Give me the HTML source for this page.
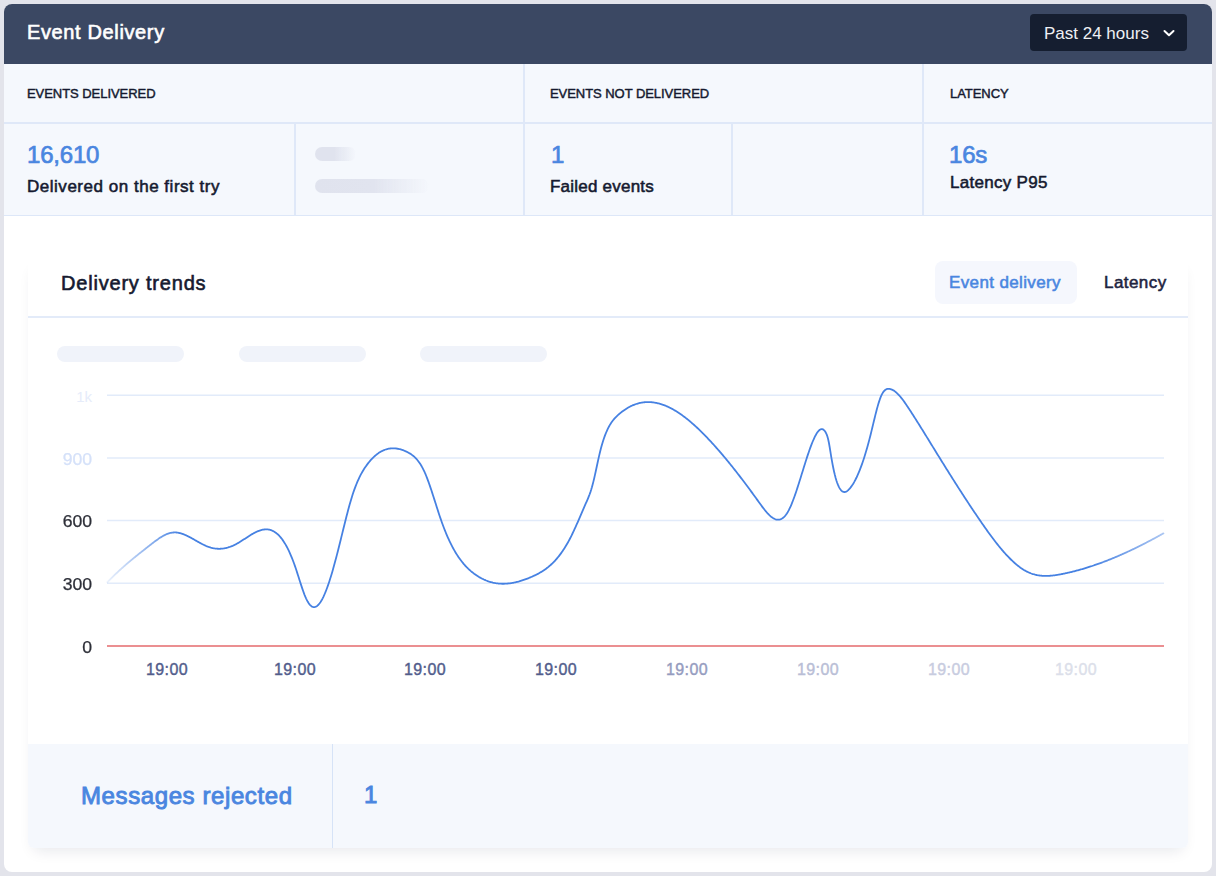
<!DOCTYPE html>
<html>
<head>
<meta charset="utf-8">
<style>
html,body{margin:0;padding:0;width:1216px;height:876px;overflow:hidden;background:#e3e4eb;font-family:"Liberation Sans",sans-serif;}
.abs{position:absolute;}
#card{position:absolute;left:4px;top:4px;width:1208px;height:868px;background:#fff;border-radius:8px;overflow:hidden;}
#hdr{position:absolute;left:0;top:0;width:1208px;height:60px;background:#3b4863;}
.t{position:absolute;white-space:nowrap;line-height:1;}
#title{left:23px;top:18px;font-size:20px;font-weight:400;color:#fff;letter-spacing:0.63px;-webkit-text-stroke:0.6px #fff;}
#btn{position:absolute;left:1026px;top:10px;width:157px;height:37px;background:#151e30;border-radius:4px;}
#btnt{left:14px;top:11px;font-size:17px;color:#eef0f4;}
#stats{position:absolute;left:0;top:60px;width:1208px;height:151px;background:#f5f8fd;border-bottom:1px solid #dde7f8;}
.hl{position:absolute;background:#dfe8f8;}
.lbl{font-size:13px;font-weight:400;color:#151a30;letter-spacing:-0.05px;-webkit-text-stroke:0.45px currentColor;}
.num{font-size:24px;font-weight:400;color:#4a86e0;letter-spacing:-0.2px;-webkit-text-stroke:0.7px #4a86e0;}
.sub{font-size:17px;font-weight:400;color:#151a30;-webkit-text-stroke:0.55px #151a30;}
#inner{position:absolute;left:24px;top:254px;width:1160px;height:590px;background:#fff;box-shadow:0 8px 14px -6px rgba(20,30,60,0.11);border-radius:6px;overflow:hidden;}
#trend{left:33px;top:15px;font-size:20px;font-weight:400;color:#151a30;letter-spacing:0.8px;-webkit-text-stroke:0.6px #151a30;}
#tab{position:absolute;left:907px;top:3px;width:142px;height:43px;background:#f5f7fd;border-radius:8px;}
.tabt{font-size:17px;font-weight:400;-webkit-text-stroke:0.55px currentColor;}
#msg{position:absolute;left:0;top:486px;width:1160px;height:104px;background:#f5f8fd;}
.pill{position:absolute;height:16px;border-radius:8px;background:#f0f3fa;filter:blur(0.4px);}
.ylab{position:absolute;width:60px;text-align:right;font-size:16px;color:#2d2f38;line-height:1;letter-spacing:0;transform:scaleX(1.1);transform-origin:100% 50%;-webkit-text-stroke:0.25px currentColor;}
.xlab{position:absolute;width:80px;text-align:center;font-size:16px;font-weight:400;color:#525d8c;line-height:1;letter-spacing:0.4px;-webkit-text-stroke:0.4px currentColor;}
</style>
</head>
<body>
<div id="card">
  <div id="hdr">
    <div class="t" id="title">Event Delivery</div>
    <div id="btn">
      <div class="t" id="btnt">Past 24 hours</div>
      <svg class="abs" style="left:132px;top:14px" width="14" height="10" viewBox="0 0 14 10"><path d="M2.5 3 L7 7.2 L11.5 3" fill="none" stroke="#fff" stroke-width="2" stroke-linecap="round" stroke-linejoin="round"/></svg>
    </div>
  </div>
  <div id="stats">
    <div class="hl" style="left:0;top:58px;width:1208px;height:2px;"></div>
    <div class="hl" style="left:519px;top:0;width:2px;height:151px;"></div>
    <div class="hl" style="left:918px;top:0;width:2px;height:151px;"></div>
    <div class="hl" style="left:290px;top:59px;width:2px;height:92px;"></div>
    <div class="hl" style="left:727px;top:59px;width:2px;height:92px;"></div>
    <div class="t lbl" style="left:23px;top:23px;">EVENTS DELIVERED</div>
    <div class="t lbl" style="left:546px;top:23px;">EVENTS NOT DELIVERED</div>
    <div class="t lbl" style="left:946px;top:23px;">LATENCY</div>
    <div class="t num" style="left:23px;top:79px;">16,610</div>
    <div class="t sub" style="left:23px;top:114px;letter-spacing:0.52px;">Delivered on the first try</div>
    <div class="pill" style="left:311px;top:83px;width:41px;height:14px;border-radius:7px;background:linear-gradient(90deg,#e0e3ee 0%,#e0e3ee 48%,rgba(224,227,238,0) 100%);"></div>
    <div class="pill" style="left:311px;top:115px;width:114px;height:14px;border-radius:7px;background:linear-gradient(90deg,#e0e3ee 0%,#e1e4ef 52%,rgba(224,227,238,0) 100%);"></div>
    <div class="t num" style="left:547px;top:79px;">1</div>
    <div class="t sub" style="left:546px;top:114px;letter-spacing:0.22px;">Failed events</div>
    <div class="t num" style="left:945px;top:79px;">16s</div>
    <div class="t sub" style="left:946px;top:110px;letter-spacing:0.29px;">Latency P95</div>
  </div>
  <div id="inner">
    <div class="t" id="trend">Delivery trends</div>
    <div id="tab"></div>
    <div class="t tabt" style="left:921px;top:16px;color:#4a86e0;letter-spacing:0.37px;">Event delivery</div>
    <div class="t tabt" style="left:1076px;top:16px;color:#1e2440;letter-spacing:0.44px;">Latency</div>
    <div class="hl" style="left:0;top:58px;width:1160px;height:2px;background:#e3ebf9;"></div>
    <div class="pill" style="left:29px;top:88px;width:127px;"></div>
    <div class="pill" style="left:211px;top:88px;width:127px;"></div>
    <div class="pill" style="left:392px;top:88px;width:127px;"></div>
    <div id="msg">
      <div class="hl" style="left:304px;top:0;width:1px;height:104px;background:#d6e3f7;"></div>
      <div class="t" style="left:53px;top:40px;font-size:24px;font-weight:400;color:#4a86e0;letter-spacing:0.6px;-webkit-text-stroke:0.9px #4a86e0;">Messages rejected</div>
      <div class="t" style="left:336px;top:39px;font-size:24px;font-weight:400;color:#4a86e0;-webkit-text-stroke:0.9px #4a86e0;">1</div>
    </div>
  </div>
</div>
<svg class="abs" style="left:0;top:0" width="1216" height="876" viewBox="0 0 1216 876">
  <defs>
    <linearGradient id="lg" gradientUnits="userSpaceOnUse" x1="107" y1="0" x2="1164" y2="0">
      <stop offset="0" stop-color="#4681e2" stop-opacity="0.1"/>
      <stop offset="0.07" stop-color="#4681e2" stop-opacity="1"/>
      <stop offset="0.93" stop-color="#4681e2" stop-opacity="1"/>
      <stop offset="1" stop-color="#4681e2" stop-opacity="0.45"/>
    </linearGradient>
  </defs>
  <g stroke="#e2ebfa" stroke-width="1.5">
    <line x1="107" y1="395.2" x2="1164" y2="395.2"/>
    <line x1="107" y1="458" x2="1164" y2="458"/>
    <line x1="107" y1="520.5" x2="1164" y2="520.5"/>
    <line x1="107" y1="583.2" x2="1164" y2="583.2"/>
  </g>
  <line x1="107" y1="646" x2="1164" y2="646" stroke="#e46a6c" stroke-width="1.6"/>
  <path d="M107.40 582.24 L108.15 581.45 L108.90 580.67 L109.65 579.90 L110.40 579.13 L111.15 578.37 L111.90 577.62 L112.65 576.87 L113.40 576.14 L114.15 575.40 L114.90 574.68 L115.65 573.96 L116.40 573.24 L117.15 572.53 L117.90 571.83 L118.65 571.13 L119.40 570.44 L120.15 569.75 L120.90 569.07 L121.65 568.40 L122.40 567.73 L123.15 567.06 L123.90 566.40 L124.65 565.74 L125.40 565.09 L126.15 564.44 L126.90 563.79 L127.65 563.15 L128.40 562.51 L129.15 561.88 L129.90 561.25 L130.65 560.62 L131.40 560.00 L132.15 559.38 L132.90 558.76 L133.65 558.15 L134.40 557.54 L135.15 556.93 L135.90 556.32 L136.65 555.72 L137.40 555.11 L138.15 554.51 L138.90 553.91 L139.65 553.32 L140.40 552.72 L141.15 552.13 L141.90 551.53 L142.65 550.94 L143.40 550.35 L144.15 549.76 L144.90 549.17 L145.65 548.58 L146.40 547.99 L147.15 547.41 L147.90 546.82 L148.65 546.23 L149.40 545.64 L150.15 545.05 L150.90 544.46 L151.65 543.88 L152.40 543.30 L153.15 542.72 L153.90 542.14 L154.65 541.58 L155.40 541.02 L156.15 540.46 L156.90 539.92 L157.65 539.39 L158.40 538.87 L159.15 538.36 L159.90 537.86 L160.65 537.38 L161.40 536.92 L162.15 536.47 L162.90 536.04 L163.65 535.63 L164.40 535.23 L165.15 534.86 L165.90 534.51 L166.65 534.19 L167.40 533.89 L168.15 533.61 L168.90 533.36 L169.65 533.14 L170.40 532.95 L171.15 532.78 L171.90 532.65 L172.65 532.55 L173.40 532.48 L174.15 532.44 L174.90 532.43 L175.65 532.46 L176.40 532.51 L177.15 532.60 L177.90 532.71 L178.65 532.84 L179.40 533.00 L180.15 533.19 L180.90 533.39 L181.65 533.62 L182.40 533.87 L183.15 534.14 L183.90 534.43 L184.65 534.73 L185.40 535.05 L186.15 535.39 L186.90 535.73 L187.65 536.10 L188.40 536.47 L189.15 536.85 L189.90 537.25 L190.65 537.65 L191.40 538.06 L192.15 538.47 L192.90 538.89 L193.65 539.32 L194.40 539.75 L195.15 540.18 L195.90 540.61 L196.65 541.03 L197.40 541.46 L198.15 541.89 L198.90 542.31 L199.65 542.73 L200.40 543.14 L201.15 543.54 L201.90 543.93 L202.65 544.32 L203.40 544.70 L204.15 545.06 L204.90 545.41 L205.65 545.75 L206.40 546.07 L207.15 546.38 L207.90 546.67 L208.65 546.94 L209.40 547.20 L210.15 547.43 L210.90 547.65 L211.65 547.84 L212.40 548.02 L213.15 548.18 L213.90 548.32 L214.65 548.44 L215.40 548.54 L216.15 548.63 L216.90 548.69 L217.65 548.74 L218.40 548.77 L219.15 548.78 L219.90 548.77 L220.65 548.74 L221.40 548.69 L222.15 548.63 L222.90 548.55 L223.65 548.45 L224.40 548.33 L225.15 548.19 L225.90 548.04 L226.65 547.86 L227.40 547.67 L228.15 547.46 L228.90 547.23 L229.65 546.99 L230.40 546.72 L231.15 546.44 L231.90 546.14 L232.65 545.83 L233.40 545.49 L234.15 545.14 L234.90 544.77 L235.65 544.39 L236.40 543.98 L237.15 543.57 L237.90 543.14 L238.65 542.70 L239.40 542.24 L240.15 541.78 L240.90 541.31 L241.65 540.83 L242.40 540.35 L243.15 539.86 L243.90 539.37 L244.65 538.88 L245.40 538.39 L246.15 537.90 L246.90 537.41 L247.65 536.92 L248.40 536.43 L249.15 535.96 L249.90 535.49 L250.65 535.02 L251.40 534.57 L252.15 534.13 L252.90 533.70 L253.65 533.28 L254.40 532.87 L255.15 532.49 L255.90 532.11 L256.65 531.76 L257.40 531.43 L258.15 531.11 L258.90 530.82 L259.65 530.55 L260.40 530.31 L261.15 530.09 L261.90 529.90 L262.65 529.73 L263.40 529.60 L264.15 529.49 L264.90 529.42 L265.65 529.38 L266.40 529.37 L267.15 529.40 L267.90 529.47 L268.65 529.58 L269.40 529.72 L270.15 529.90 L270.90 530.13 L271.65 530.40 L272.40 530.71 L273.15 531.07 L273.90 531.48 L274.65 531.93 L275.40 532.44 L276.15 532.99 L276.90 533.59 L277.65 534.25 L278.40 534.95 L279.15 535.72 L279.90 536.53 L280.65 537.40 L281.40 538.33 L282.15 539.32 L282.90 540.37 L283.65 541.47 L284.40 542.64 L285.15 543.86 L285.90 545.16 L286.65 546.51 L287.40 547.93 L288.15 549.41 L288.90 550.96 L289.65 552.58 L290.40 554.27 L291.15 556.03 L291.90 557.85 L292.65 559.75 L293.40 561.72 L294.15 563.77 L294.90 565.88 L295.65 568.07 L296.40 570.32 L297.15 572.63 L297.90 574.97 L298.65 577.32 L299.40 579.69 L300.15 582.04 L300.90 584.36 L301.65 586.65 L302.40 588.87 L303.15 591.03 L303.90 593.09 L304.65 595.06 L305.40 596.90 L306.15 598.62 L306.90 600.18 L307.65 601.58 L308.40 602.82 L309.15 603.89 L309.90 604.80 L310.65 605.56 L311.40 606.16 L312.15 606.61 L312.90 606.90 L313.65 607.05 L314.40 607.06 L315.15 606.92 L315.90 606.65 L316.65 606.24 L317.40 605.69 L318.15 605.01 L318.90 604.21 L319.65 603.28 L320.40 602.23 L321.15 601.05 L321.90 599.76 L322.65 598.36 L323.40 596.84 L324.15 595.22 L324.90 593.49 L325.65 591.67 L326.40 589.75 L327.15 587.73 L327.90 585.63 L328.65 583.45 L329.40 581.18 L330.15 578.84 L330.90 576.42 L331.65 573.93 L332.40 571.38 L333.15 568.76 L333.90 566.08 L334.65 563.35 L335.40 560.57 L336.15 557.74 L336.90 554.86 L337.65 551.95 L338.40 548.99 L339.15 546.01 L339.90 542.99 L340.65 539.96 L341.40 536.91 L342.15 533.85 L342.90 530.80 L343.65 527.75 L344.40 524.72 L345.15 521.72 L345.90 518.74 L346.65 515.81 L347.40 512.92 L348.15 510.08 L348.90 507.30 L349.65 504.59 L350.40 501.96 L351.15 499.41 L351.90 496.95 L352.65 494.59 L353.40 492.32 L354.15 490.16 L354.90 488.09 L355.65 486.10 L356.40 484.21 L357.15 482.40 L357.90 480.66 L358.65 479.01 L359.40 477.42 L360.15 475.91 L360.90 474.46 L361.65 473.08 L362.40 471.75 L363.15 470.49 L363.90 469.27 L364.65 468.11 L365.40 466.99 L366.15 465.91 L366.90 464.87 L367.65 463.87 L368.40 462.90 L369.15 461.97 L369.90 461.08 L370.65 460.21 L371.40 459.38 L372.15 458.58 L372.90 457.82 L373.65 457.09 L374.40 456.39 L375.15 455.72 L375.90 455.08 L376.65 454.48 L377.40 453.90 L378.15 453.36 L378.90 452.84 L379.65 452.36 L380.40 451.90 L381.15 451.48 L381.90 451.08 L382.65 450.71 L383.40 450.37 L384.15 450.06 L384.90 449.77 L385.65 449.51 L386.40 449.28 L387.15 449.07 L387.90 448.89 L388.65 448.73 L389.40 448.60 L390.15 448.50 L390.90 448.42 L391.65 448.36 L392.40 448.33 L393.15 448.32 L393.90 448.33 L394.65 448.37 L395.40 448.43 L396.15 448.51 L396.90 448.61 L397.65 448.74 L398.40 448.88 L399.15 449.05 L399.90 449.23 L400.65 449.44 L401.40 449.67 L402.15 449.91 L402.90 450.18 L403.65 450.46 L404.40 450.76 L405.15 451.08 L405.90 451.42 L406.65 451.77 L407.40 452.14 L408.15 452.53 L408.90 452.94 L409.65 453.38 L410.40 453.84 L411.15 454.33 L411.90 454.86 L412.65 455.42 L413.40 456.02 L414.15 456.67 L414.90 457.37 L415.65 458.12 L416.40 458.92 L417.15 459.78 L417.90 460.70 L418.65 461.68 L419.40 462.73 L420.15 463.85 L420.90 465.04 L421.65 466.32 L422.40 467.67 L423.15 469.11 L423.90 470.63 L424.65 472.24 L425.40 473.95 L426.15 475.75 L426.90 477.64 L427.65 479.60 L428.40 481.63 L429.15 483.73 L429.90 485.88 L430.65 488.09 L431.40 490.33 L432.15 492.62 L432.90 494.93 L433.65 497.27 L434.40 499.62 L435.15 501.98 L435.90 504.34 L436.65 506.69 L437.40 509.04 L438.15 511.36 L438.90 513.66 L439.65 515.92 L440.40 518.15 L441.15 520.32 L441.90 522.45 L442.65 524.52 L443.40 526.53 L444.15 528.50 L444.90 530.41 L445.65 532.27 L446.40 534.08 L447.15 535.84 L447.90 537.55 L448.65 539.21 L449.40 540.83 L450.15 542.40 L450.90 543.93 L451.65 545.41 L452.40 546.85 L453.15 548.25 L453.90 549.60 L454.65 550.91 L455.40 552.19 L456.15 553.43 L456.90 554.62 L457.65 555.78 L458.40 556.91 L459.15 558.00 L459.90 559.05 L460.65 560.07 L461.40 561.06 L462.15 562.02 L462.90 562.94 L463.65 563.84 L464.40 564.70 L465.15 565.54 L465.90 566.35 L466.65 567.14 L467.40 567.89 L468.15 568.63 L468.90 569.33 L469.65 570.02 L470.40 570.68 L471.15 571.33 L471.90 571.95 L472.65 572.55 L473.40 573.13 L474.15 573.70 L474.90 574.24 L475.65 574.77 L476.40 575.29 L477.15 575.79 L477.90 576.27 L478.65 576.73 L479.40 577.18 L480.15 577.61 L480.90 578.02 L481.65 578.42 L482.40 578.81 L483.15 579.17 L483.90 579.53 L484.65 579.86 L485.40 580.18 L486.15 580.49 L486.90 580.78 L487.65 581.06 L488.40 581.32 L489.15 581.57 L489.90 581.80 L490.65 582.02 L491.40 582.23 L492.15 582.42 L492.90 582.60 L493.65 582.76 L494.40 582.92 L495.15 583.05 L495.90 583.18 L496.65 583.29 L497.40 583.39 L498.15 583.48 L498.90 583.55 L499.65 583.61 L500.40 583.66 L501.15 583.70 L501.90 583.73 L502.65 583.74 L503.40 583.74 L504.15 583.73 L504.90 583.71 L505.65 583.68 L506.40 583.64 L507.15 583.59 L507.90 583.52 L508.65 583.45 L509.40 583.36 L510.15 583.27 L510.90 583.16 L511.65 583.05 L512.40 582.92 L513.15 582.79 L513.90 582.64 L514.65 582.49 L515.40 582.32 L516.15 582.15 L516.90 581.97 L517.65 581.78 L518.40 581.58 L519.15 581.38 L519.90 581.16 L520.65 580.94 L521.40 580.71 L522.15 580.47 L522.90 580.22 L523.65 579.97 L524.40 579.71 L525.15 579.44 L525.90 579.16 L526.65 578.88 L527.40 578.59 L528.15 578.29 L528.90 577.99 L529.65 577.68 L530.40 577.36 L531.15 577.04 L531.90 576.71 L532.65 576.38 L533.40 576.04 L534.15 575.69 L534.90 575.34 L535.65 574.97 L536.40 574.60 L537.15 574.22 L537.90 573.83 L538.65 573.42 L539.40 573.01 L540.15 572.58 L540.90 572.14 L541.65 571.69 L542.40 571.22 L543.15 570.74 L543.90 570.24 L544.65 569.73 L545.40 569.20 L546.15 568.65 L546.90 568.08 L547.65 567.50 L548.40 566.90 L549.15 566.27 L549.90 565.63 L550.65 564.97 L551.40 564.28 L552.15 563.57 L552.90 562.84 L553.65 562.09 L554.40 561.31 L555.15 560.51 L555.90 559.68 L556.65 558.82 L557.40 557.94 L558.15 557.03 L558.90 556.10 L559.65 555.13 L560.40 554.14 L561.15 553.12 L561.90 552.06 L562.65 550.97 L563.40 549.86 L564.15 548.71 L564.90 547.53 L565.65 546.31 L566.40 545.06 L567.15 543.77 L567.90 542.45 L568.65 541.09 L569.40 539.70 L570.15 538.27 L570.90 536.80 L571.65 535.30 L572.40 533.76 L573.15 532.20 L573.90 530.60 L574.65 528.98 L575.40 527.34 L576.15 525.68 L576.90 523.99 L577.65 522.29 L578.40 520.58 L579.15 518.86 L579.90 517.13 L580.65 515.39 L581.40 513.65 L582.15 511.90 L582.90 510.16 L583.65 508.41 L584.40 506.68 L585.15 504.95 L585.90 503.23 L586.65 501.52 L587.40 499.80 L588.15 498.03 L588.90 496.17 L589.65 494.21 L590.40 492.11 L591.15 489.83 L591.90 487.34 L592.65 484.61 L593.40 481.64 L594.15 478.47 L594.90 475.15 L595.65 471.73 L596.40 468.24 L597.15 464.73 L597.90 461.26 L598.65 457.87 L599.40 454.60 L600.15 451.50 L600.90 448.57 L601.65 445.82 L602.40 443.23 L603.15 440.80 L603.90 438.52 L604.65 436.38 L605.40 434.38 L606.15 432.51 L606.90 430.77 L607.65 429.14 L608.40 427.63 L609.15 426.21 L609.90 424.90 L610.65 423.68 L611.40 422.54 L612.15 421.47 L612.90 420.48 L613.65 419.55 L614.40 418.68 L615.15 417.86 L615.90 417.08 L616.65 416.34 L617.40 415.63 L618.15 414.95 L618.90 414.28 L619.65 413.64 L620.40 413.01 L621.15 412.40 L621.90 411.81 L622.65 411.24 L623.40 410.69 L624.15 410.15 L624.90 409.64 L625.65 409.14 L626.40 408.66 L627.15 408.20 L627.90 407.75 L628.65 407.32 L629.40 406.92 L630.15 406.52 L630.90 406.15 L631.65 405.79 L632.40 405.45 L633.15 405.13 L633.90 404.83 L634.65 404.54 L635.40 404.26 L636.15 404.01 L636.90 403.77 L637.65 403.55 L638.40 403.34 L639.15 403.15 L639.90 402.98 L640.65 402.82 L641.40 402.67 L642.15 402.55 L642.90 402.43 L643.65 402.34 L644.40 402.26 L645.15 402.19 L645.90 402.14 L646.65 402.10 L647.40 402.08 L648.15 402.07 L648.90 402.08 L649.65 402.10 L650.40 402.14 L651.15 402.19 L651.90 402.26 L652.65 402.34 L653.40 402.43 L654.15 402.54 L654.90 402.66 L655.65 402.79 L656.40 402.94 L657.15 403.10 L657.90 403.27 L658.65 403.46 L659.40 403.66 L660.15 403.87 L660.90 404.09 L661.65 404.33 L662.40 404.58 L663.15 404.84 L663.90 405.12 L664.65 405.40 L665.40 405.70 L666.15 406.01 L666.90 406.34 L667.65 406.67 L668.40 407.02 L669.15 407.37 L669.90 407.74 L670.65 408.12 L671.40 408.51 L672.15 408.91 L672.90 409.32 L673.65 409.75 L674.40 410.18 L675.15 410.62 L675.90 411.08 L676.65 411.54 L677.40 412.02 L678.15 412.50 L678.90 413.00 L679.65 413.50 L680.40 414.02 L681.15 414.54 L681.90 415.07 L682.65 415.62 L683.40 416.17 L684.15 416.73 L684.90 417.30 L685.65 417.88 L686.40 418.46 L687.15 419.06 L687.90 419.66 L688.65 420.27 L689.40 420.90 L690.15 421.52 L690.90 422.16 L691.65 422.81 L692.40 423.46 L693.15 424.12 L693.90 424.79 L694.65 425.46 L695.40 426.15 L696.15 426.84 L696.90 427.53 L697.65 428.24 L698.40 428.95 L699.15 429.66 L699.90 430.39 L700.65 431.12 L701.40 431.86 L702.15 432.60 L702.90 433.35 L703.65 434.10 L704.40 434.87 L705.15 435.63 L705.90 436.41 L706.65 437.18 L707.40 437.97 L708.15 438.76 L708.90 439.55 L709.65 440.35 L710.40 441.16 L711.15 441.97 L711.90 442.78 L712.65 443.60 L713.40 444.43 L714.15 445.26 L714.90 446.09 L715.65 446.93 L716.40 447.78 L717.15 448.63 L717.90 449.48 L718.65 450.34 L719.40 451.20 L720.15 452.07 L720.90 452.95 L721.65 453.82 L722.40 454.70 L723.15 455.59 L723.90 456.48 L724.65 457.38 L725.40 458.28 L726.15 459.18 L726.90 460.09 L727.65 461.00 L728.40 461.92 L729.15 462.84 L729.90 463.76 L730.65 464.69 L731.40 465.62 L732.15 466.56 L732.90 467.50 L733.65 468.44 L734.40 469.39 L735.15 470.34 L735.90 471.29 L736.65 472.25 L737.40 473.21 L738.15 474.18 L738.90 475.15 L739.65 476.12 L740.40 477.10 L741.15 478.08 L741.90 479.06 L742.65 480.05 L743.40 481.03 L744.15 482.03 L744.90 483.02 L745.65 484.02 L746.40 485.02 L747.15 486.03 L747.90 487.04 L748.65 488.05 L749.40 489.06 L750.15 490.08 L750.90 491.10 L751.65 492.12 L752.40 493.14 L753.15 494.17 L753.90 495.20 L754.65 496.23 L755.40 497.27 L756.15 498.31 L756.90 499.35 L757.65 500.39 L758.40 501.43 L759.15 502.48 L759.90 503.52 L760.65 504.55 L761.40 505.58 L762.15 506.59 L762.90 507.59 L763.65 508.57 L764.40 509.53 L765.15 510.47 L765.90 511.37 L766.65 512.25 L767.40 513.10 L768.15 513.90 L768.90 514.67 L769.65 515.40 L770.40 516.08 L771.15 516.71 L771.90 517.29 L772.65 517.81 L773.40 518.28 L774.15 518.69 L774.90 519.03 L775.65 519.31 L776.40 519.52 L777.15 519.65 L777.90 519.71 L778.65 519.69 L779.40 519.59 L780.15 519.40 L780.90 519.13 L781.65 518.76 L782.40 518.31 L783.15 517.75 L783.90 517.09 L784.65 516.33 L785.40 515.47 L786.15 514.50 L786.90 513.41 L787.65 512.21 L788.40 510.89 L789.15 509.46 L789.90 507.91 L790.65 506.27 L791.40 504.53 L792.15 502.70 L792.90 500.78 L793.65 498.79 L794.40 496.73 L795.15 494.60 L795.90 492.42 L796.65 490.18 L797.40 487.90 L798.15 485.57 L798.90 483.22 L799.65 480.83 L800.40 478.43 L801.15 476.01 L801.90 473.59 L802.65 471.16 L803.40 468.73 L804.15 466.32 L804.90 463.93 L805.65 461.55 L806.40 459.21 L807.15 456.90 L807.90 454.64 L808.65 452.42 L809.40 450.26 L810.15 448.16 L810.90 446.13 L811.65 444.17 L812.40 442.29 L813.15 440.50 L813.90 438.80 L814.65 437.20 L815.40 435.71 L816.15 434.34 L816.90 433.11 L817.65 432.02 L818.40 431.08 L819.15 430.32 L819.90 429.73 L820.65 429.33 L821.40 429.13 L822.15 429.14 L822.90 429.38 L823.65 429.85 L824.40 430.56 L825.15 431.53 L825.90 432.77 L826.65 434.37 L827.40 436.46 L828.15 439.19 L828.90 442.72 L829.65 447.00 L830.40 451.68 L831.15 456.35 L831.90 460.72 L832.65 464.78 L833.40 468.52 L834.15 471.95 L834.90 475.08 L835.65 477.91 L836.40 480.45 L837.15 482.70 L837.90 484.68 L838.65 486.40 L839.40 487.86 L840.15 489.08 L840.90 490.08 L841.65 490.85 L842.40 491.42 L843.15 491.80 L843.90 491.99 L844.65 492.02 L845.40 491.88 L846.15 491.59 L846.90 491.17 L847.65 490.63 L848.40 489.96 L849.15 489.20 L849.90 488.35 L850.65 487.41 L851.40 486.41 L852.15 485.32 L852.90 484.17 L853.65 482.93 L854.40 481.62 L855.15 480.24 L855.90 478.78 L856.65 477.25 L857.40 475.63 L858.15 473.95 L858.90 472.18 L859.65 470.34 L860.40 468.42 L861.15 466.43 L861.90 464.36 L862.65 462.21 L863.40 459.98 L864.15 457.68 L864.90 455.30 L865.65 452.84 L866.40 450.30 L867.15 447.68 L867.90 444.99 L868.65 442.22 L869.40 439.36 L870.15 436.43 L870.90 433.42 L871.65 430.35 L872.40 427.25 L873.15 424.13 L873.90 421.01 L874.65 417.93 L875.40 414.90 L876.15 411.95 L876.90 409.10 L877.65 406.38 L878.40 403.80 L879.15 401.39 L879.90 399.17 L880.65 397.17 L881.40 395.41 L882.15 393.90 L882.90 392.62 L883.65 391.57 L884.40 390.71 L885.15 390.03 L885.90 389.53 L886.65 389.17 L887.40 388.95 L888.15 388.85 L888.90 388.85 L889.65 388.93 L890.40 389.08 L891.15 389.31 L891.90 389.60 L892.65 389.96 L893.40 390.37 L894.15 390.85 L894.90 391.38 L895.65 391.97 L896.40 392.61 L897.15 393.30 L897.90 394.04 L898.65 394.82 L899.40 395.65 L900.15 396.51 L900.90 397.41 L901.65 398.34 L902.40 399.31 L903.15 400.31 L903.90 401.33 L904.65 402.38 L905.40 403.45 L906.15 404.54 L906.90 405.64 L907.65 406.77 L908.40 407.90 L909.15 409.04 L909.90 410.19 L910.65 411.35 L911.40 412.51 L912.15 413.67 L912.90 414.84 L913.65 416.01 L914.40 417.18 L915.15 418.36 L915.90 419.55 L916.65 420.73 L917.40 421.92 L918.15 423.11 L918.90 424.31 L919.65 425.51 L920.40 426.71 L921.15 427.91 L921.90 429.11 L922.65 430.32 L923.40 431.53 L924.15 432.74 L924.90 433.95 L925.65 435.17 L926.40 436.38 L927.15 437.60 L927.90 438.81 L928.65 440.03 L929.40 441.25 L930.15 442.47 L930.90 443.69 L931.65 444.91 L932.40 446.13 L933.15 447.35 L933.90 448.57 L934.65 449.79 L935.40 451.01 L936.15 452.23 L936.90 453.44 L937.65 454.66 L938.40 455.87 L939.15 457.09 L939.90 458.30 L940.65 459.51 L941.40 460.72 L942.15 461.93 L942.90 463.14 L943.65 464.34 L944.40 465.55 L945.15 466.75 L945.90 467.95 L946.65 469.15 L947.40 470.35 L948.15 471.55 L948.90 472.74 L949.65 473.94 L950.40 475.13 L951.15 476.32 L951.90 477.51 L952.65 478.69 L953.40 479.88 L954.15 481.06 L954.90 482.24 L955.65 483.42 L956.40 484.60 L957.15 485.77 L957.90 486.95 L958.65 488.12 L959.40 489.28 L960.15 490.45 L960.90 491.61 L961.65 492.78 L962.40 493.94 L963.15 495.09 L963.90 496.25 L964.65 497.40 L965.40 498.55 L966.15 499.70 L966.90 500.84 L967.65 501.98 L968.40 503.12 L969.15 504.26 L969.90 505.39 L970.65 506.53 L971.40 507.65 L972.15 508.78 L972.90 509.90 L973.65 511.02 L974.40 512.14 L975.15 513.26 L975.90 514.37 L976.65 515.48 L977.40 516.58 L978.15 517.68 L978.90 518.78 L979.65 519.88 L980.40 520.97 L981.15 522.06 L981.90 523.15 L982.65 524.23 L983.40 525.30 L984.15 526.38 L984.90 527.44 L985.65 528.51 L986.40 529.56 L987.15 530.61 L987.90 531.66 L988.65 532.70 L989.40 533.73 L990.15 534.75 L990.90 535.77 L991.65 536.79 L992.40 537.79 L993.15 538.79 L993.90 539.77 L994.65 540.76 L995.40 541.73 L996.15 542.69 L996.90 543.64 L997.65 544.59 L998.40 545.53 L999.15 546.45 L999.90 547.37 L1000.65 548.27 L1001.40 549.17 L1002.15 550.05 L1002.90 550.93 L1003.65 551.79 L1004.40 552.64 L1005.15 553.48 L1005.90 554.31 L1006.65 555.12 L1007.40 555.92 L1008.15 556.71 L1008.90 557.49 L1009.65 558.25 L1010.40 559.00 L1011.15 559.74 L1011.90 560.46 L1012.65 561.17 L1013.40 561.86 L1014.15 562.54 L1014.90 563.21 L1015.65 563.86 L1016.40 564.49 L1017.15 565.11 L1017.90 565.71 L1018.65 566.29 L1019.40 566.86 L1020.15 567.41 L1020.90 567.95 L1021.65 568.46 L1022.40 568.96 L1023.15 569.44 L1023.90 569.91 L1024.65 570.35 L1025.40 570.78 L1026.15 571.19 L1026.90 571.58 L1027.65 571.95 L1028.40 572.30 L1029.15 572.63 L1029.90 572.94 L1030.65 573.24 L1031.40 573.52 L1032.15 573.78 L1032.90 574.02 L1033.65 574.25 L1034.40 574.46 L1035.15 574.66 L1035.90 574.83 L1036.65 575.00 L1037.40 575.15 L1038.15 575.28 L1038.90 575.40 L1039.65 575.51 L1040.40 575.60 L1041.15 575.68 L1041.90 575.75 L1042.65 575.80 L1043.40 575.85 L1044.15 575.88 L1044.90 575.90 L1045.65 575.91 L1046.40 575.90 L1047.15 575.89 L1047.90 575.87 L1048.65 575.84 L1049.40 575.79 L1050.15 575.74 L1050.90 575.68 L1051.65 575.62 L1052.40 575.54 L1053.15 575.46 L1053.90 575.37 L1054.65 575.27 L1055.40 575.17 L1056.15 575.06 L1056.90 574.94 L1057.65 574.82 L1058.40 574.69 L1059.15 574.56 L1059.90 574.43 L1060.65 574.29 L1061.40 574.14 L1062.15 574.00 L1062.90 573.85 L1063.65 573.70 L1064.40 573.54 L1065.15 573.38 L1065.90 573.22 L1066.65 573.06 L1067.40 572.89 L1068.15 572.72 L1068.90 572.55 L1069.65 572.38 L1070.40 572.20 L1071.15 572.02 L1071.90 571.84 L1072.65 571.65 L1073.40 571.47 L1074.15 571.28 L1074.90 571.08 L1075.65 570.89 L1076.40 570.69 L1077.15 570.49 L1077.90 570.29 L1078.65 570.09 L1079.40 569.88 L1080.15 569.67 L1080.90 569.46 L1081.65 569.24 L1082.40 569.02 L1083.15 568.80 L1083.90 568.58 L1084.65 568.36 L1085.40 568.13 L1086.15 567.90 L1086.90 567.67 L1087.65 567.44 L1088.40 567.20 L1089.15 566.96 L1089.90 566.72 L1090.65 566.48 L1091.40 566.23 L1092.15 565.98 L1092.90 565.73 L1093.65 565.48 L1094.40 565.22 L1095.15 564.97 L1095.90 564.71 L1096.65 564.44 L1097.40 564.18 L1098.15 563.91 L1098.90 563.64 L1099.65 563.37 L1100.40 563.10 L1101.15 562.83 L1101.90 562.55 L1102.65 562.27 L1103.40 561.99 L1104.15 561.70 L1104.90 561.42 L1105.65 561.13 L1106.40 560.84 L1107.15 560.55 L1107.90 560.25 L1108.65 559.95 L1109.40 559.66 L1110.15 559.36 L1110.90 559.05 L1111.65 558.75 L1112.40 558.44 L1113.15 558.13 L1113.90 557.82 L1114.65 557.51 L1115.40 557.19 L1116.15 556.88 L1116.90 556.56 L1117.65 556.24 L1118.40 555.91 L1119.15 555.59 L1119.90 555.26 L1120.65 554.93 L1121.40 554.60 L1122.15 554.27 L1122.90 553.94 L1123.65 553.60 L1124.40 553.26 L1125.15 552.92 L1125.90 552.58 L1126.65 552.24 L1127.40 551.89 L1128.15 551.55 L1128.90 551.20 L1129.65 550.85 L1130.40 550.49 L1131.15 550.14 L1131.90 549.78 L1132.65 549.43 L1133.40 549.07 L1134.15 548.71 L1134.90 548.34 L1135.65 547.98 L1136.40 547.61 L1137.15 547.24 L1137.90 546.87 L1138.65 546.50 L1139.40 546.13 L1140.15 545.75 L1140.90 545.38 L1141.65 545.00 L1142.40 544.62 L1143.15 544.24 L1143.90 543.86 L1144.65 543.47 L1145.40 543.09 L1146.15 542.70 L1146.90 542.31 L1147.65 541.92 L1148.40 541.53 L1149.15 541.13 L1149.90 540.74 L1150.65 540.34 L1151.40 539.94 L1152.15 539.54 L1152.90 539.14 L1153.65 538.74 L1154.40 538.34 L1155.15 537.93 L1155.90 537.52 L1156.65 537.12 L1157.40 536.71 L1158.15 536.30 L1158.90 535.88 L1159.65 535.47 L1160.40 535.05 L1161.15 534.64 L1161.90 534.22 L1162.65 533.80 L1163.40 533.38" fill="none" stroke="url(#lg)" stroke-width="1.8" stroke-linejoin="round" stroke-linecap="round"/>
</svg>
<div class="ylab" style="left:32px;top:389px;color:#e6ecfa;transform:none;-webkit-text-stroke:0;font-size:15px;">1k</div>
<div class="ylab" style="left:32px;top:452px;color:#d5e1f9;">900</div>
<div class="ylab" style="left:32px;top:514px;">600</div>
<div class="ylab" style="left:32px;top:577px;">300</div>
<div class="ylab" style="left:32px;top:640px;">0</div>
<div class="xlab" style="left:127px;top:662px;">19:00</div>
<div class="xlab" style="left:255px;top:662px;">19:00</div>
<div class="xlab" style="left:385px;top:662px;">19:00</div>
<div class="xlab" style="left:516px;top:662px;">19:00</div>
<div class="xlab" style="left:647px;top:662px;color:#959cc0;">19:00</div>
<div class="xlab" style="left:778px;top:662px;color:#b9bed6;">19:00</div>
<div class="xlab" style="left:909px;top:662px;color:#c8cce0;">19:00</div>
<div class="xlab" style="left:1036px;top:662px;color:#dcdfea;">19:00</div>
</body>
</html>
